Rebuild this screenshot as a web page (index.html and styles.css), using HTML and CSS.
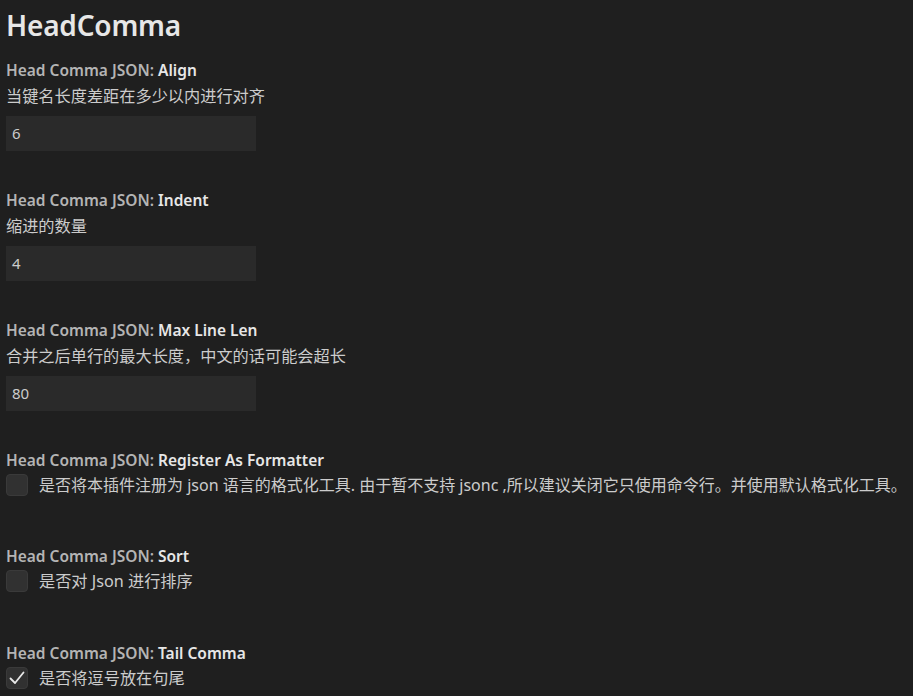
FILE: index.html
```html
<!DOCTYPE html>
<html lang="zh">
<head>
<meta charset="utf-8">
<title>HeadComma</title>
<link rel="stylesheet" href="styles.css">
</head>
<body>
<div class="page">
  <h1 class="title">HeadComma</h1>

  <div class="setting">
    <div class="label"><span class="cat">Head Comma JSON: </span><span class="key">Align</span></div>
    <div class="desc">当键名长度差距在多少以内进行对齐</div>
    <div class="input">6</div>
  </div>

  <div class="setting">
    <div class="label"><span class="cat">Head Comma JSON: </span><span class="key">Indent</span></div>
    <div class="desc">缩进的数量</div>
    <div class="input">4</div>
  </div>

  <div class="setting">
    <div class="label"><span class="cat">Head Comma JSON: </span><span class="key">Max Line Len</span></div>
    <div class="desc">合并之后单行的最大长度，中文的话可能会超长</div>
    <div class="input">80</div>
  </div>

  <div class="setting bool">
    <div class="label"><span class="cat">Head Comma JSON: </span><span class="key">Register As Formatter</span></div>
    <div class="row"><span class="box"></span><span class="desc-inline long">是否将本插件注册为 json 语言的格式化工具. 由于暂不支持 jsonc ,所以建议关闭它只使用命令行。并使用默认格式化工具。</span></div>
  </div>

  <div class="setting bool sort">
    <div class="label"><span class="cat">Head Comma JSON: </span><span class="key">Sort</span></div>
    <div class="row"><span class="box"></span><span class="desc-inline">是否对 Json 进行排序</span></div>
  </div>

  <div class="setting bool last">
    <div class="label"><span class="cat">Head Comma JSON: </span><span class="key">Tail Comma</span></div>
    <div class="row"><span class="box checked"><svg viewBox="0 0 22 22" width="22" height="22"><path d="M4.5 11.5 L9 16 L17.5 5.5" fill="none" stroke="#e8e8e8" stroke-width="1.8" stroke-linecap="round" stroke-linejoin="round"/></svg></span><span class="desc-inline">是否将逗号放在句尾</span></div>
  </div>
</div>
</body>
</html>
```

FILE: styles.css
```css
html, body {
  margin: 0;
  padding: 0;
  background: #1f1f1f;
  overflow: hidden;
}
.page {
  padding: 0 0 0 6px;
  font-family: "Noto Sans", "Noto Sans CJK SC", sans-serif;
  color: #cccccc;
  width: 907px;
}
.title {
  margin: 0;
  height: 58px;
  line-height: 50px;
  font-size: 28px;
  font-weight: 600;
  color: #e7e7e7;
  letter-spacing: -0.2px;
}
.setting {
  padding-bottom: 37px;
}
.label {
  height: 24px;
  line-height: 24px;
  font-size: 15.5px;
  font-weight: 600;
  white-space: nowrap;
}
.cat { color: #b4b4b4; }
.key { color: #e7e7e7; }
.desc {
  height: 28px;
  line-height: 28px;
  font-size: 16.2px;
  color: #cccccc;
  white-space: nowrap;
}
.input {
  margin-top: 6px;
  width: 244px;
  height: 35px;
  line-height: 35px;
  padding-left: 6px;
  background: #2a2a2a;
  font-size: 15px;
  color: #cccccc;
}
.setting.bool { padding-bottom: 48px; }
.setting.bool.sort { padding-bottom: 49px; }
.setting.bool.last { padding-bottom: 0; }
.row {
  margin-top: 2px;
  height: 22px;
  display: flex;
  align-items: center;
  gap: 11px;
  white-space: nowrap;
}
.box {
  flex: none;
  width: 20px;
  height: 20px;
  border: 1px solid #3a3a3a;
  border-radius: 4px;
  background: #313131;
  position: relative;
}
.box svg { position: absolute; left: -1px; top: -1px; }
.desc-inline {
  font-size: 16.2px;
  line-height: 22px;
  color: #cccccc;
}
.desc-inline.long { font-size: 16px; }
```
